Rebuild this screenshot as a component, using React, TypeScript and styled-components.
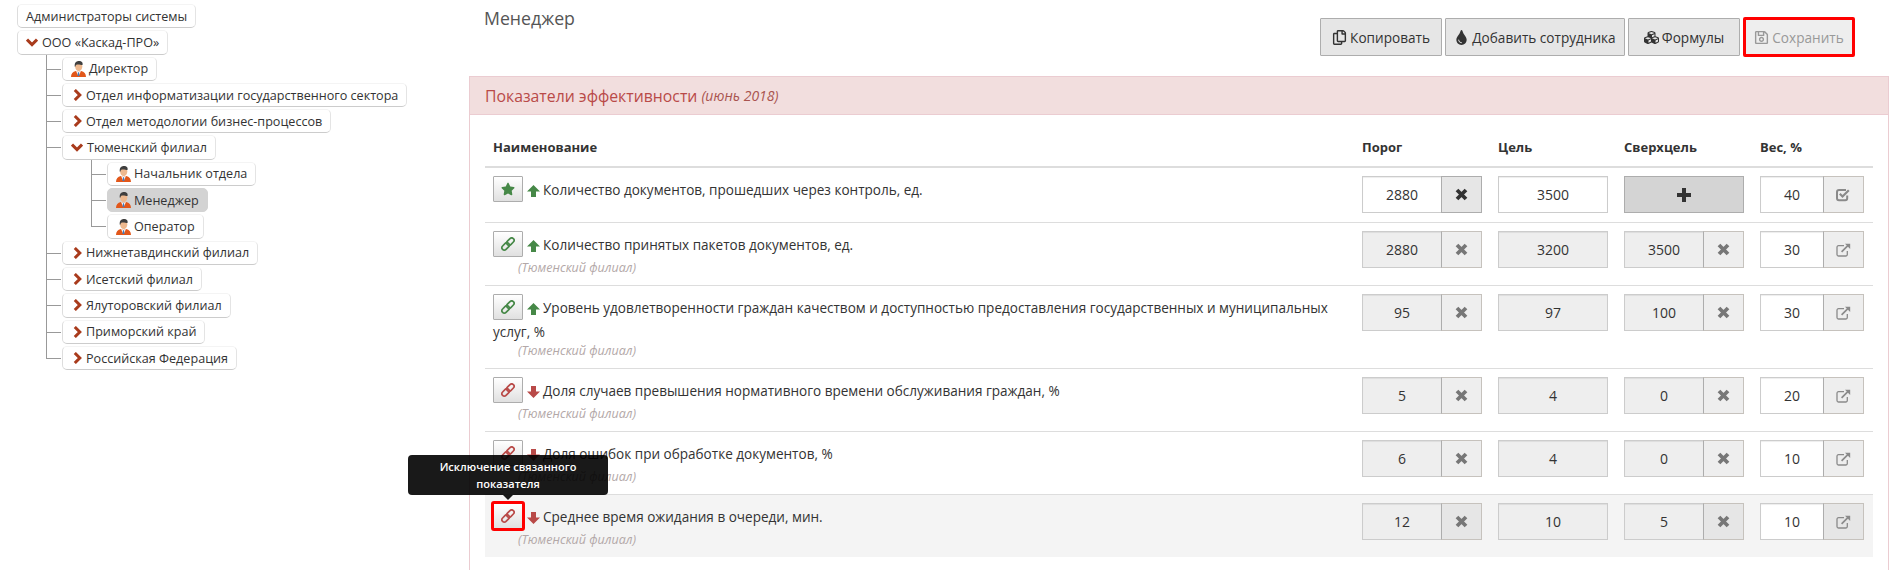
import styled, { createGlobalStyle } from "styled-components";
import { FaCubes, FaRegCopy, FaRegSave, FaStar, FaTint } from "react-icons/fa";

const GlobalStyle = createGlobalStyle`
  html, body {
    margin: 0;
    padding: 0;
    background: #fff;
    overflow: hidden;
  }
  body {
    font-family: "Open Sans", "Liberation Sans", sans-serif;
    font-size: 13.55px;
    color: #333;
  }
  * {
    box-sizing: border-box;
  }
`;

const Page = styled.div`
  display: flex;
  width: 1894px;
  height: 570px;
  overflow: hidden;
`;

const Sidebar = styled.aside`
  width: 469px;
  flex: none;
  padding: 2px 0 0 17px;
`;

const TreeList = styled.ul<{ $root?: boolean }>`
  list-style: none;
  margin: 0;
  padding: 0 0 0 ${(p) => (p.$root ? 0 : 45)}px;
`;

const TreeItem = styled.li<{ $nested?: boolean }>`
  position: relative;
  padding-top: 2px;

  ${(p) =>
    p.$nested &&
    `
    &::before {
      content: "";
      position: absolute;
      left: -16px;
      top: 0;
      bottom: 0;
      width: 1px;
      background: #999;
    }
    &:last-child::before {
      bottom: auto;
      height: 14px;
    }
    &::after {
      content: "";
      position: absolute;
      left: -16px;
      top: 14px;
      width: 15px;
      height: 1px;
      background: #999;
    }
  `}
`;

const Node = styled.div<{ $active?: boolean }>`
  display: inline-flex;
  align-items: center;
  height: 24.3px;
  padding: 0 8px;
  font-size: 12.6px;
  color: #333;
  white-space: nowrap;
  border-radius: 5px;
  vertical-align: top;
  background: ${(p) => (p.$active ? "#d3d3d3" : "#fff")};
  border: 1px solid ${(p) => (p.$active ? "#d3d3d3" : "#ddd")};
  border-top-color: ${(p) => (p.$active ? "#d3d3d3" : "#f4f4f4")};
  border-bottom-color: ${(p) => (p.$active ? "#d3d3d3" : "#ccc")};
  border-right-color: ${(p) => (p.$active ? "#d3d3d3" : "#e4e4e4")};
`;

const Caret = styled.span<{ $open?: boolean }>`
  display: inline-flex;
  margin: 0 4px 0 ${(p) => (p.$open ? 0 : 2)}px;
  color: #a93b1c;
`;

const ChevronRight = () => (
  <svg width="9" height="12" viewBox="0 0 9 12" fill="none" stroke="currentColor" strokeWidth="3">
    <path d="M1.8 1l5 5-5 5" />
  </svg>
);

const ChevronDown = () => (
  <svg width="12" height="9" viewBox="0 0 12 9" fill="none" stroke="currentColor" strokeWidth="3">
    <path d="M1 1.6l5 5 5-5" />
  </svg>
);

const AvatarWrap = styled.span`
  display: inline-flex;
  margin-right: 3px;
`;

function Avatar() {
  return (
    <AvatarWrap>
      <svg width="15" height="16" viewBox="0 0 15 16">
        <path d="M0 16c0-3.6 1.8-5.3 4.8-6L7.5 11l2.7-1c3 0.7 4.8 2.4 4.8 6z" fill="#e2571a" />
        <path d="M5 10L7.5 15.2 10 10 7.5 11z" fill="#f6f6f6" />
        <path d="M7 11.2h1l0.4 3.8h-1.8z" fill="#3b7cc4" />
        <ellipse cx="7.7" cy="5.4" rx="3.6" ry="4.8" fill="#eeb98f" />
        <path d="M3.9 6C3 2 5.2 0 8 0c2.7 0 4.2 1.6 3.5 4C9.6 3.8 6.6 3 5.3 3.8 4.6 4.3 4.7 5.4 3.9 6z" fill="#3f3f3f" />
      </svg>
    </AvatarWrap>
  );
}

const Main = styled.main`
  flex: 1;
  min-width: 0;
  display: flex;
  flex-direction: column;
`;

const TopBar = styled.div`
  height: 76px;
  flex: none;
  display: flex;
  justify-content: space-between;
  padding: 18px 40px 0 15px;
`;

const PageTitle = styled.h1`
  margin: -14px 0 0;
  height: 28px;
  font-size: 17.7px;
  line-height: 28px;
  font-weight: 400;
  color: #555;
`;

const Toolbar = styled.div`
  display: flex;
  gap: 3px;
  height: 38px;
`;

const ToolButton = styled.button<{ $marked?: boolean; $width: number }>`
  display: inline-flex;
  align-items: center;
  justify-content: center;
  gap: 3px;
  height: 38px;
  width: ${(p) => p.$width}px;
  margin-left: ${(p) => (p.$marked ? 1 : 0)}px;
  padding: 0;
  font: inherit;
  font-size: 13.6px;
  color: ${(p) => (p.$marked ? "#999" : "#333")};
  background: ${(p) => (p.$marked ? "#eee" : "#e6e6e6")};
  border: 1px solid ${(p) => (p.$marked ? "#eee" : "#adadad")};
  outline: ${(p) => (p.$marked ? "3px solid #f00" : "none")};
  outline-offset: -2px;
  border-radius: 1px;
  svg {
    font-size: 15px;
  }
`;

const Panel = styled.section`
  flex: 1;
  margin-right: 5px;
  border-left: 1px solid #ebccd1;
  border-right: 1px solid #ebccd1;
  border-top: 1px solid #ebccd1;
`;

const PanelHeading = styled.div`
  height: 38px;
  padding: 0 15px;
  display: flex;
  align-items: center;
  gap: 4px;
  font-size: 15.8px;
  color: #b94a48;
  background: #f2dede;
  border-bottom: 1px solid #ebccd1;
`;

const PeriodNote = styled.em`
  font-size: 14px;
  color: #a9544f;
`;

const PanelBody = styled.div`
  padding: 0 15px;
`;

const columns = "1fr 136px 126px 136px 121px";

const HeadRow = styled.div`
  display: grid;
  grid-template-columns: ${columns};
  height: 53px;
  align-items: end;
  border-bottom: 2px solid #ddd;
`;

const HeadCell = styled.div`
  padding: 0 8px 9px;
  font-size: 13px;
  font-weight: 700;
  line-height: 20px;
  color: #333;
`;

const Row = styled.div<{ $current?: boolean }>`
  display: grid;
  grid-template-columns: ${columns};
  border-bottom: ${(p) => (p.$current ? "none" : "1px solid #ddd")};
  background: ${(p) => (p.$current ? "#f4f4f4" : "transparent")};
`;

const NameCell = styled.div`
  padding: 10px 8px 7px;
  line-height: 20px;
`;

const ValueCell = styled.div`
  padding: 8px 8px 9px;
`;

const WeightCell = styled(ValueCell)`
  padding-right: 9px;
`;

const LinkWrap = styled.span`
  position: relative;
  top: -2px;
  display: inline-block;
  vertical-align: middle;
  margin-right: 4px;
`;

const LinkButton = styled.button<{ $tone: "up" | "down"; $marked?: boolean }>`
  display: flex;
  align-items: center;
  justify-content: center;
  width: 30px;
  height: 26px;
  padding: 0;
  font-size: 14px;
  color: ${(p) => (p.$tone === "up" ? "#468847" : "#b94a48")};
  background: linear-gradient(#fff, #e0e0e0);
  border: 1px solid #adadad;
  border-radius: 1px;
  outline: ${(p) => (p.$marked ? "3px solid #f00" : "none")};
  outline-offset: -1px;
`;

const Direction = styled.span<{ $tone: "up" | "down" }>`
  display: inline-flex;
  vertical-align: -2px;
  margin-right: 3px;
  color: ${(p) => (p.$tone === "up" ? "#468847" : "#b94a48")};
`;

const Owner = styled.div`
  margin-top: -1px;
  padding-left: 25px;
  font-size: 12.5px;
  font-style: italic;
  color: #b3a8a8;
`;

const Tooltip = styled.div`
  position: absolute;
  left: -85px;
  bottom: 34px;
  width: 200px;
  padding: 3px 10px;
  z-index: 5;
  font-size: 11px;
  font-weight: 600;
  line-height: 17px;
  text-align: center;
  color: #fff;
  background: rgba(0, 0, 0, 0.9);
  border-radius: 4px;

  &::after {
    content: "";
    position: absolute;
    left: 50%;
    bottom: -5px;
    margin-left: -5px;
    border-width: 5px 5px 0;
    border-style: solid;
    border-color: rgba(0, 0, 0, 0.9) transparent transparent;
  }
`;

const Group = styled.div`
  display: flex;
  height: 37px;
`;

const ValueBox = styled.div<{ $editable?: boolean }>`
  flex: 1;
  display: flex;
  align-items: center;
  justify-content: center;
  font-size: 14px;
  color: #333;
  background: ${(p) => (p.$editable ? "#fff" : "#eee")};
  border: 1px solid #ccc;
  box-shadow: inset 0 1px 1px rgba(0, 0, 0, 0.075);
`;

const AddonButton = styled.button<{ $enabled?: boolean; $current?: boolean }>`
  flex: 0 0 41px;
  margin-left: -1px;
  display: flex;
  align-items: center;
  justify-content: center;
  padding: 0;
  color: ${(p) => (p.$enabled ? "#333" : "#777")};
  background: ${(p) => (p.$enabled || p.$current ? "#e6e6e6" : "#eee")};
  border: 1px solid ${(p) => (p.$enabled ? "#adadad" : "#c6c2bd")};
  border-left-color: #adadad;
`;

const WeightAddon = styled(AddonButton)`
  color: #8a8a8a;
`;

const AddButton = styled.button`
  width: 100%;
  height: 37px;
  display: flex;
  align-items: center;
  justify-content: center;
  padding: 0;
  color: #333;
  background: #d4d4d4;
  border: 1px solid #adadad;
`;

const RemoveIcon = () => (
  <svg width="13" height="13" viewBox="0 0 13 13" fill="none" stroke="currentColor" strokeWidth="3.8">
    <path d="M2 2l9 9M11 2l-9 9" />
  </svg>
);

const PlusIcon = () => (
  <svg width="14" height="14" viewBox="0 0 14 14" fill="currentColor">
    <path d="M5 0h4v5h5v4H9v5H5V9H0V5h5z" />
  </svg>
);

const ExternalIcon = () => (
  <svg width="15" height="14" viewBox="0 0 15 14" fill="none" stroke="currentColor" strokeWidth="1.3">
    <path d="M8 2.7H2.5a1.5 1.5 0 0 0-1.5 1.5v7.3A1.5 1.5 0 0 0 2.5 13h7.3a1.5 1.5 0 0 0 1.5-1.5V8" />
    <path d="M5.6 8.8L12.6 1.8" strokeWidth="1.7" />
    <path d="M9 0.8h5.2V6" fill="currentColor" stroke="none" />
  </svg>
);

const CheckedIcon = () => (
  <svg width="15" height="14" viewBox="0 0 15 14" fill="none" stroke="currentColor">
    <path d="M11.2 7.5v2.7a2 2 0 0 1-2 2H3a2 2 0 0 1-2-2V4a2 2 0 0 1 2-2h7" strokeWidth="2" />
    <path d="M3.8 5.8l2.7 2.7 6.3-6.3" strokeWidth="2.2" />
  </svg>
);

const ChainIcon = () => (
  <svg width="14" height="14" viewBox="0 0 14 14" fill="none" stroke="currentColor" strokeWidth="1.7">
    <g transform="rotate(-45 7 7)">
      <rect x="-0.6" y="4.6" width="8.4" height="4.8" rx="2.4" />
      <rect x="6.2" y="4.6" width="8.4" height="4.8" rx="2.4" />
    </g>
  </svg>
);

const ArrowIcon = ({ up }: { up: boolean }) => (
  <svg width="13" height="12" viewBox="0 0 13 12" fill="currentColor">
    <path d={up ? "M6.5 0L13 6.5H9V12H4V6.5H0z" : "M6.5 12L13 5.5H9V0H4V5.5H0z"} />
  </svg>
);

type TreeNode = {
  label: string;
  kind: "plain" | "person" | "closed" | "open";
  active?: boolean;
  children?: TreeNode[];
};

const tree: TreeNode[] = [
  { label: "Администраторы системы", kind: "plain" },
  {
    label: "ООО «Каскад-ПРО»",
    kind: "open",
    children: [
      { label: "Директор", kind: "person" },
      { label: "Отдел информатизации государственного сектора", kind: "closed" },
      { label: "Отдел методологии бизнес-процессов", kind: "closed" },
      {
        label: "Тюменский филиал",
        kind: "open",
        children: [
          { label: "Начальник отдела", kind: "person" },
          { label: "Менеджер", kind: "person", active: true },
          { label: "Оператор", kind: "person" },
        ],
      },
      { label: "Нижнетавдинский филиал", kind: "closed" },
      { label: "Исетский филиал", kind: "closed" },
      { label: "Ялуторовский филиал", kind: "closed" },
      { label: "Приморский край", kind: "closed" },
      { label: "Российская Федерация", kind: "closed" },
    ],
  },
];

function TreeBranch({ nodes, nested }: { nodes: TreeNode[]; nested?: boolean }) {
  return (
    <TreeList $root={!nested}>
      {nodes.map((node) => (
        <TreeItem key={node.label} $nested={nested}>
          <Node $active={node.active}>
            {node.kind === "open" && (
              <Caret $open>
                <ChevronDown />
              </Caret>
            )}
            {node.kind === "closed" && (
              <Caret>
                <ChevronRight />
              </Caret>
            )}
            {node.kind === "person" && <Avatar />}
            {node.label}
          </Node>
          {node.children && <TreeBranch nodes={node.children} nested />}
        </TreeItem>
      ))}
    </TreeList>
  );
}

type Metric = {
  name: string;
  owner?: string;
  tone: "up" | "down";
  own?: boolean;
  threshold: string;
  target: string;
  stretch?: string;
  weight: string;
};

const metrics: Metric[] = [
  {
    name: "Количество документов, прошедших через контроль, ед.",
    tone: "up",
    own: true,
    threshold: "2880",
    target: "3500",
    weight: "40",
  },
  {
    name: "Количество принятых пакетов документов, ед.",
    owner: "(Тюменский филиал)",
    tone: "up",
    threshold: "2880",
    target: "3200",
    stretch: "3500",
    weight: "30",
  },
  {
    name: "Уровень удовлетворенности граждан качеством и доступностью предоставления государственных и муниципальных услуг, %",
    owner: "(Тюменский филиал)",
    tone: "up",
    threshold: "95",
    target: "97",
    stretch: "100",
    weight: "30",
  },
  {
    name: "Доля случаев превышения нормативного времени обслуживания граждан, %",
    owner: "(Тюменский филиал)",
    tone: "down",
    threshold: "5",
    target: "4",
    stretch: "0",
    weight: "20",
  },
  {
    name: "Доля ошибок при обработке документов, %",
    owner: "(Тюменский филиал)",
    tone: "down",
    threshold: "6",
    target: "4",
    stretch: "0",
    weight: "10",
  },
  {
    name: "Среднее время ожидания в очереди, мин.",
    owner: "(Тюменский филиал)",
    tone: "down",
    threshold: "12",
    target: "10",
    stretch: "5",
    weight: "10",
  },
];

export default function App() {
  return (
    <Page>
      <GlobalStyle />
      <Sidebar>
        <TreeBranch nodes={tree} />
      </Sidebar>
      <Main>
        <TopBar>
          <PageTitle>Менеджер</PageTitle>
          <Toolbar>
            <ToolButton $width={122}>
              <FaRegCopy />
              Копировать
            </ToolButton>
            <ToolButton $width={180}>
              <FaTint />
              Добавить сотрудника
            </ToolButton>
            <ToolButton $width={112}>
              <FaCubes />
              Формулы
            </ToolButton>
            <ToolButton $width={110} $marked>
              <FaRegSave />
              Сохранить
            </ToolButton>
          </Toolbar>
        </TopBar>
        <Panel>
          <PanelHeading>
            Показатели эффективности <PeriodNote>(июнь 2018)</PeriodNote>
          </PanelHeading>
          <PanelBody>
            <HeadRow>
              <HeadCell>Наименование</HeadCell>
              <HeadCell>Порог</HeadCell>
              <HeadCell>Цель</HeadCell>
              <HeadCell>Сверхцель</HeadCell>
              <HeadCell>Вес, %</HeadCell>
            </HeadRow>
            {metrics.map((m, i) => {
              const current = i === metrics.length - 1;
              return (
                <Row key={m.name} $current={current}>
                  <NameCell>
                    <LinkWrap>
                      <LinkButton $tone={m.tone} $marked={current}>
                        {m.own ? <FaStar /> : <ChainIcon />}
                      </LinkButton>
                      {current && <Tooltip>Исключение связанного показателя</Tooltip>}
                    </LinkWrap>
                    <Direction $tone={m.tone}>
                      <ArrowIcon up={m.tone === "up"} />
                    </Direction>
                    {m.name}
                    {m.owner && <Owner>{m.owner}</Owner>}
                  </NameCell>
                  <ValueCell>
                    <Group>
                      <ValueBox $editable={m.own}>{m.threshold}</ValueBox>
                      <AddonButton $enabled={m.own} $current={current}>
                        <RemoveIcon />
                      </AddonButton>
                    </Group>
                  </ValueCell>
                  <ValueCell>
                    <Group>
                      <ValueBox $editable={m.own}>{m.target}</ValueBox>
                    </Group>
                  </ValueCell>
                  <ValueCell>
                    {m.stretch ? (
                      <Group>
                        <ValueBox>{m.stretch}</ValueBox>
                        <AddonButton $current={current}>
                          <RemoveIcon />
                        </AddonButton>
                      </Group>
                    ) : (
                      <AddButton>
                        <PlusIcon />
                      </AddButton>
                    )}
                  </ValueCell>
                  <WeightCell>
                    <Group>
                      <ValueBox $editable>{m.weight}</ValueBox>
                      <WeightAddon $current={current}>{m.own ? <CheckedIcon /> : <ExternalIcon />}</WeightAddon>
                    </Group>
                  </WeightCell>
                </Row>
              );
            })}
          </PanelBody>
        </Panel>
      </Main>
    </Page>
  );
}
